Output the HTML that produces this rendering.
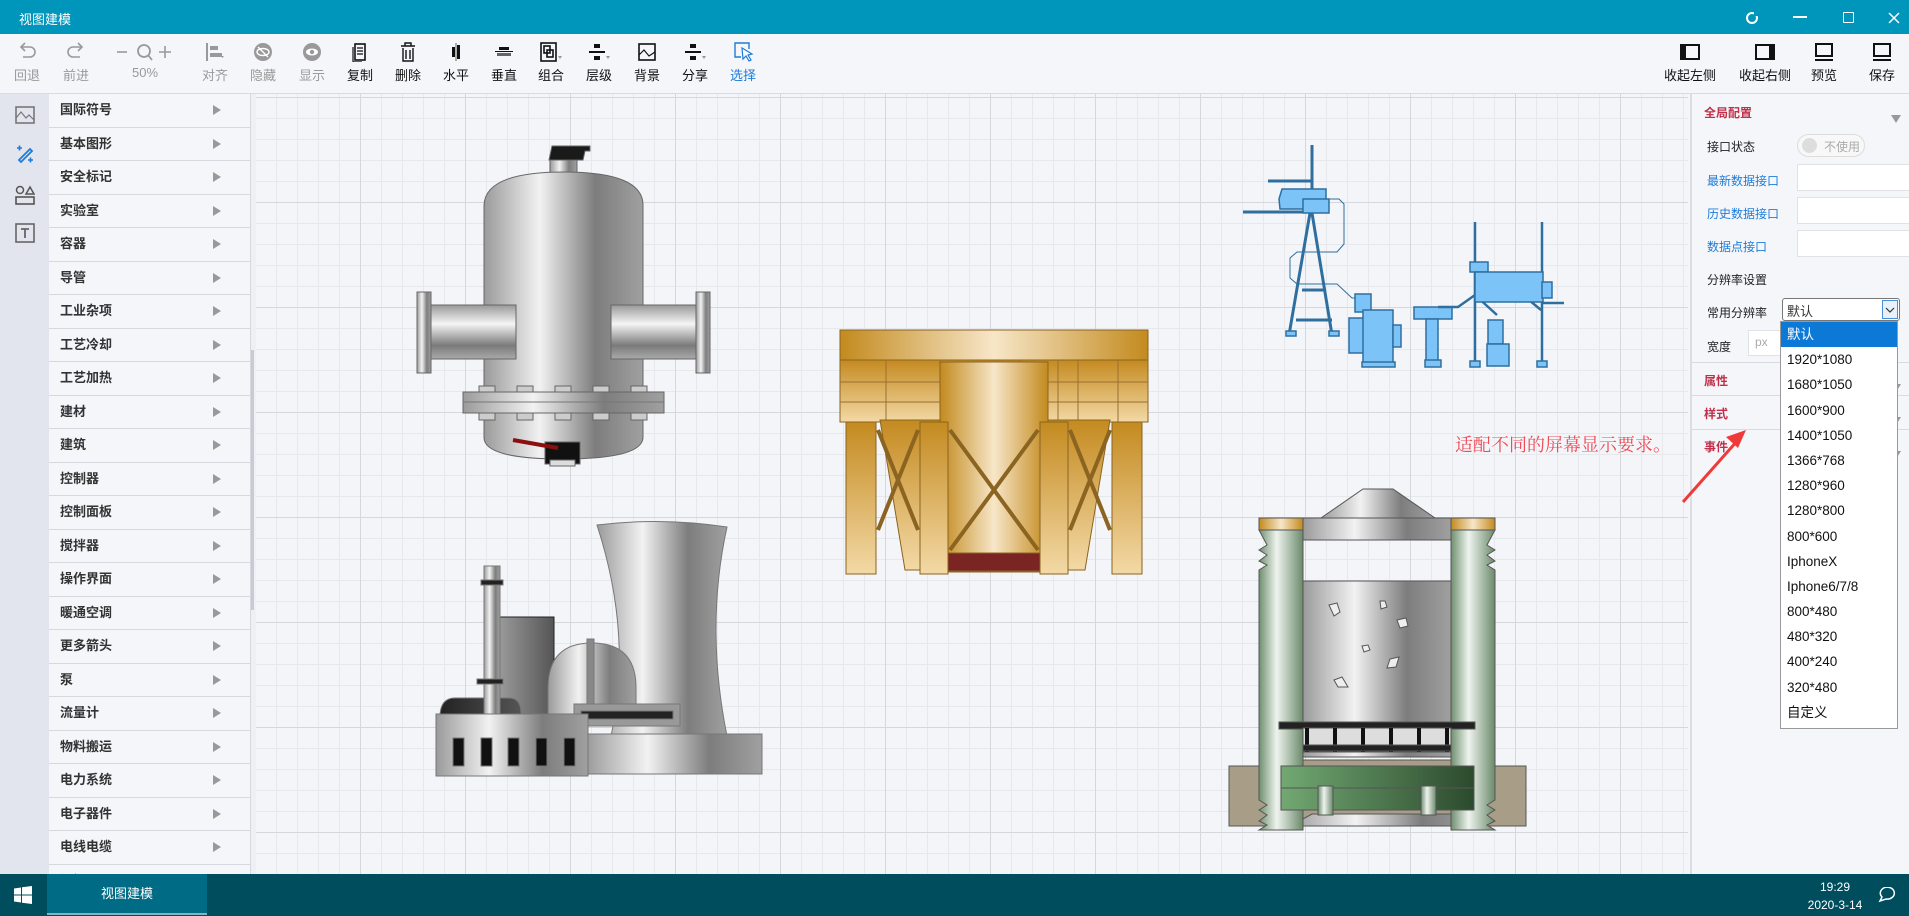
<!DOCTYPE html>
<html><head><meta charset="utf-8"><style>
*{margin:0;padding:0;box-sizing:border-box}
html,body{width:1909px;height:916px;overflow:hidden}
body{position:relative;background:#f4f6fa;font-family:"Liberation Sans","Noto Sans CJK SC",sans-serif;font-size:13px;color:#333}
.abs{position:absolute}
#title{left:0;top:0;width:1909px;height:34px;background:#0096bb;color:#fff}
#tb{left:0;top:34px;width:1909px;height:60px;background:#f4f6fa;border-bottom:1px solid #d8dbe2}
.tool{position:absolute;top:0;width:44px;text-align:center;font-size:13px;color:#111}
.tool svg{display:block;margin:8px auto 3px;width:22px;height:20px}
.gray{color:#999}
#side{left:0;top:94px;width:49px;height:780px;background:#e2e5ed}
#list{left:49px;top:94px;width:201px;height:780px;background:#f4f6fa;overflow:hidden}
.it{height:33.5px;border-bottom:1px solid #d5d8de;line-height:32px;padding-left:11px;font-weight:bold;color:#333;position:relative;font-size:13px}
.it:after{content:"";position:absolute;left:164px;top:11px;border-left:8px solid #999;border-top:5px solid transparent;border-bottom:5px solid transparent}
#canvas{left:256px;top:94px;width:1432px;height:780px;background-color:#f4f5f9;
background-image:linear-gradient(#d5d7dc 1px,transparent 1px),linear-gradient(90deg,#d5d7dc 1px,transparent 1px),linear-gradient(#e6e8ec 1px,transparent 1px),linear-gradient(90deg,#e6e8ec 1px,transparent 1px);
background-size:105px 105px,105px 105px,21px 21px,21px 21px;background-position:0 3px,-1px 0,0 3px,-1px 0}
#rp{left:1690px;top:94px;width:219px;height:780px;background:#f4f6fa;border-left:2px solid #dadde3}
.lbl{position:absolute;font-size:12px;color:#222}
.blue{color:#1f7bd8}
.red{color:#c0304a;font-weight:bold}
.inp{position:absolute;background:#fff;border:1px solid #dfe2e7}
.sec{position:absolute;left:0;width:219px;border-top:1px solid #d8dbe1}
.tri{position:absolute;right:8px;border-top:8px solid #999;border-left:5px solid transparent;border-right:5px solid transparent}
#dd{left:1780px;top:321px;width:118px;height:408px;background:#fff;border:1px solid #999}
#dd div{height:25.2px;line-height:25px;padding-left:6px;font-size:13.5px;color:#111}
#task{left:0;top:874px;width:1909px;height:42px;background:#004d5e;color:#fff}
</style></head><body>

<div id="title" class="abs">
 <div class="abs" style="left:19px;top:9px;font-size:13px">视图建模</div>
 <svg class="abs" style="left:1745px;top:11px" width="14" height="14" viewBox="0 0 14 14"><circle cx="7" cy="7" r="5" fill="none" stroke="#fff" stroke-width="2"/><rect x="9" y="1" width="4" height="4" fill="#0096bb"/></svg>
 <div class="abs" style="left:1793px;top:16px;width:14px;height:2px;background:#fff"></div>
 <div class="abs" style="left:1843px;top:12px;width:11px;height:11px;border:1.5px solid #fff;border-radius:1px"></div>
 <svg class="abs" style="left:1888px;top:12px" width="12" height="12"><path d="M1 1L11 11M11 1L1 11" stroke="#fff" stroke-width="1.5"/></svg>
</div>

<div id="tb" class="abs">
 <div class="tool gray" style="left:5px"><svg viewBox="0 0 22 20"><path d="M6 5h8a5 5 0 0 1 0 10H7M9 1L5 5l4 4" fill="none" stroke="#999" stroke-width="1.6"/></svg>回退</div>
 <div class="tool gray" style="left:54px"><svg viewBox="0 0 22 20"><path d="M16 5H8a5 5 0 0 0 0 10h7M13 1l4 4-4 4" fill="none" stroke="#999" stroke-width="1.6"/></svg>前进</div>
 <div class="tool gray" style="left:110px;width:70px"><svg viewBox="0 0 60 20" style="width:60px"><path d="M2 10h10" stroke="#999" stroke-width="1.6"/><circle cx="29" cy="9" r="6" fill="none" stroke="#999" stroke-width="1.8"/><path d="M33 13l4 5" stroke="#999" stroke-width="1.8"/><path d="M44 10h12M50 4v12" stroke="#999" stroke-width="1.6"/></svg>50%</div>
 <div class="tool gray" style="left:193px"><svg viewBox="0 0 22 20"><path d="M3 1v18" stroke="#999" stroke-width="2"/><rect x="6" y="4" width="8" height="4" fill="#999"/><rect x="6" y="11" width="12" height="4" fill="#999"/><path d="M17 14l3 0-1.5 2z" fill="#999"/></svg>对齐</div>
 <div class="tool gray" style="left:241px"><svg viewBox="0 0 22 20"><circle cx="11" cy="10" r="9" fill="#999"/><ellipse cx="11" cy="10" rx="6" ry="3.5" fill="none" stroke="#fff" stroke-width="1.4"/><path d="M6 5l10 10" stroke="#fff" stroke-width="1.4"/></svg>隐藏</div>
 <div class="tool gray" style="left:290px"><svg viewBox="0 0 22 20"><circle cx="11" cy="10" r="9" fill="#999"/><ellipse cx="11" cy="10" rx="6" ry="3.5" fill="#fff"/><circle cx="11" cy="10" r="2.2" fill="#999"/></svg>显示</div>
 <div class="tool" style="left:338px"><svg viewBox="0 0 22 20"><rect x="6" y="2" width="10" height="16" fill="none" stroke="#111" stroke-width="1.6"/><path d="M8 6h6M8 9h6M8 12h6" stroke="#111" stroke-width="1.2"/><path d="M4 5v15h9" fill="none" stroke="#111" stroke-width="1.2"/></svg>复制</div>
 <div class="tool" style="left:386px"><svg viewBox="0 0 22 20"><path d="M4 4h14M8 4V1h6v3M6 6v13h10V6M9 8v9M13 8v9" fill="none" stroke="#111" stroke-width="1.4"/></svg>删除</div>
 <div class="tool" style="left:434px"><svg viewBox="0 0 22 20"><rect x="7" y="5" width="3" height="10" fill="#111"/><rect x="12" y="3" width="3" height="14" fill="#111"/><path d="M11 1v18" stroke="#666"/></svg>水平</div>
 <div class="tool" style="left:482px"><svg viewBox="0 0 22 20"><rect x="6" y="5" width="10" height="3" fill="#111"/><rect x="4" y="11" width="14" height="3" fill="#666"/><path d="M2 9.5h18" stroke="#111"/></svg>垂直</div>
 <div class="tool" style="left:529px"><svg viewBox="0 0 22 20"><rect x="1" y="1" width="15" height="18" fill="none" stroke="#111" stroke-width="1.6"/><rect x="4" y="4" width="6" height="7" fill="none" stroke="#111" stroke-width="1.6"/><rect x="7" y="8" width="6" height="7" fill="none" stroke="#111" stroke-width="1.6"/><path d="M18 14h4l-2 3z" fill="#999"/></svg>组合</div>
 <div class="tool" style="left:577px"><svg viewBox="0 0 22 20"><rect x="6" y="2" width="6" height="4" fill="#111"/><rect x="1" y="9" width="16" height="2" fill="#111"/><rect x="6" y="14" width="6" height="4" fill="#111"/><path d="M18 14h4l-2 3z" fill="#999"/></svg>层级</div>
 <div class="tool" style="left:625px"><svg viewBox="0 0 22 20"><rect x="3" y="2" width="16" height="16" fill="none" stroke="#111" stroke-width="1.6"/><path d="M3 13l5-5 5 6 6-4" fill="none" stroke="#111" stroke-width="1.2"/></svg>背景</div>
 <div class="tool" style="left:673px"><svg viewBox="0 0 22 20"><rect x="6" y="2" width="6" height="4" fill="#111"/><rect x="1" y="9" width="16" height="2" fill="#111"/><rect x="6" y="14" width="6" height="4" fill="#111"/><path d="M18 14h4l-2 3z" fill="#999"/></svg>分享</div>
 <div class="tool" style="left:721px;color:#1f7bd8"><svg viewBox="0 0 22 20"><path d="M9 15H3V1h14v6" fill="none" stroke="#1f7bd8" stroke-width="1.4"/><path d="M10 6l10 6-4 1 3 5-2 1-3-5-3 3z" fill="#fff" stroke="#1f7bd8" stroke-width="1.2"/></svg>选择</div>
 <div class="tool" style="left:1660px;width:60px"><svg viewBox="0 0 22 20"><rect x="2" y="3" width="18" height="14" fill="none" stroke="#111" stroke-width="2"/><rect x="2" y="3" width="5" height="14" fill="#111"/></svg>收起左侧</div>
 <div class="tool" style="left:1735px;width:60px"><svg viewBox="0 0 22 20"><rect x="2" y="3" width="18" height="14" fill="none" stroke="#111" stroke-width="2"/><rect x="15" y="3" width="5" height="14" fill="#111"/></svg>收起右侧</div>
 <div class="tool" style="left:1802px;width:44px"><svg viewBox="0 0 22 20"><rect x="3" y="2" width="16" height="12" fill="none" stroke="#111" stroke-width="2"/><path d="M2 18h18" stroke="#111" stroke-width="2"/></svg>预览</div>
 <div class="tool" style="left:1860px;width:44px"><svg viewBox="0 0 22 20"><rect x="3" y="2" width="16" height="12" fill="none" stroke="#111" stroke-width="2"/><path d="M2 18h18" stroke="#111" stroke-width="2"/></svg>保存</div>
</div>

<div id="side" class="abs">
 <svg class="abs" style="left:15px;top:12px" width="20" height="18"><rect x="1" y="1" width="18" height="16" fill="none" stroke="#777" stroke-width="1.6"/><path d="M1 12l5-6 5 6 3-3 5 5" fill="none" stroke="#777" stroke-width="1.2"/></svg>
 <svg class="abs" style="left:15px;top:50px" width="20" height="20"><path d="M4 16L15 5l2 2L6 18z" fill="none" stroke="#1f7bd8" stroke-width="1.8"/><path d="M2 4h5M4.5 1.5v5M13 16h5M15.5 13.5v5" stroke="#1f7bd8" stroke-width="1.6"/></svg>
 <svg class="abs" style="left:15px;top:91px" width="20" height="20"><circle cx="5" cy="5" r="3.5" fill="none" stroke="#555" stroke-width="1.5"/><path d="M11 9l4-7 4 7z" fill="none" stroke="#555" stroke-width="1.5"/><rect x="1" y="12" width="18" height="7" fill="none" stroke="#555" stroke-width="1.6"/></svg>
 <svg class="abs" style="left:15px;top:129px" width="20" height="20"><rect x="1" y="1" width="18" height="18" fill="none" stroke="#666" stroke-width="1.6"/><path d="M6 6h8M10 6v9" stroke="#666" stroke-width="1.8"/></svg>
</div>
<div id="list" class="abs">
 <div class="it">国际符号</div><div class="it">基本图形</div><div class="it">安全标记</div><div class="it">实验室</div><div class="it">容器</div><div class="it">导管</div><div class="it">工业杂项</div><div class="it">工艺冷却</div><div class="it">工艺加热</div><div class="it">建材</div><div class="it">建筑</div><div class="it">控制器</div><div class="it">控制面板</div><div class="it">搅拌器</div><div class="it">操作界面</div><div class="it">暖通空调</div><div class="it">更多箭头</div><div class="it">泵</div><div class="it">流量计</div><div class="it">物料搬运</div><div class="it">电力系统</div><div class="it">电子器件</div><div class="it">电线电缆</div><div class="it">阀门</div>
</div>
<div class="abs" style="left:250px;top:94px;width:6px;height:780px;background:#eef0f4;border-left:1px solid #d5d8de"></div>
<div class="abs" style="left:251px;top:350px;width:3px;height:260px;background:#c8cbd1"></div>

<div id="canvas" class="abs"></div>

<svg class="abs" style="left:0;top:0" width="1909" height="916">
<defs>
 <linearGradient id="m" x1="0" x2="1"><stop offset="0" stop-color="#9a9a9a"/><stop offset=".35" stop-color="#f2f2f2"/><stop offset=".7" stop-color="#7d7d7d"/><stop offset="1" stop-color="#a0a0a0"/></linearGradient>
 <linearGradient id="mv" x1="0" y1="0" x2="0" y2="1"><stop offset="0" stop-color="#999"/><stop offset=".35" stop-color="#f5f5f5"/><stop offset=".75" stop-color="#7a7a7a"/><stop offset="1" stop-color="#aaa"/></linearGradient>
 <linearGradient id="g" x1="0" x2="1"><stop offset="0" stop-color="#c38a1e"/><stop offset=".5" stop-color="#f7e6c8"/><stop offset="1" stop-color="#c38a1e"/></linearGradient>
 <linearGradient id="gv" x1="0" y1="0" x2="0" y2="1"><stop offset="0" stop-color="#c48a20"/><stop offset="1" stop-color="#f3d9a6"/></linearGradient>
 <linearGradient id="gr" x1="0" x2="1"><stop offset="0" stop-color="#6f8f6f"/><stop offset=".4" stop-color="#eef3ee"/><stop offset="1" stop-color="#6b8a6b"/></linearGradient>
 <linearGradient id="gb" x1="0" x2="1"><stop offset="0" stop-color="#72a872"/><stop offset="1" stop-color="#2c4a2e"/></linearGradient>
 <linearGradient id="dk" x1="0" x2="1"><stop offset="0" stop-color="#222"/><stop offset="1" stop-color="#555"/></linearGradient>
 <linearGradient id="dg" x1="0" x2="1"><stop offset="0" stop-color="#999"/><stop offset="1" stop-color="#555"/></linearGradient>
</defs>
<!-- tank -->
<g stroke="#666" stroke-width="1">
 <path d="M549 160l3-14h38v5h-5l-2 9z" fill="#1a1a1a"/>
 <rect x="550" y="160" width="27" height="14" fill="url(#m)"/>
 <path d="M484 437V206q0-34 80-34t79 34v231q0 22-80 22t-79-22z" fill="url(#m)"/>
 <rect x="431" y="305" width="85" height="54" fill="url(#mv)"/>
 <rect x="611" y="305" width="85" height="54" fill="url(#mv)"/>
 <rect x="417" y="292" width="14" height="81" fill="url(#m)"/>
 <rect x="696" y="292" width="14" height="81" fill="url(#m)"/>
 <g fill="#ccc"><rect x="479" y="386" width="16" height="7"/><rect x="517" y="386" width="16" height="7"/><rect x="555" y="386" width="16" height="7"/><rect x="593" y="386" width="16" height="7"/><rect x="631" y="386" width="16" height="7"/>
 <rect x="479" y="413" width="16" height="7"/><rect x="517" y="413" width="16" height="7"/><rect x="555" y="413" width="16" height="7"/><rect x="593" y="413" width="16" height="7"/><rect x="631" y="413" width="16" height="7"/></g>
 <rect x="463" y="392" width="201" height="21" fill="url(#m)"/>
 <path d="M463 402h201" stroke="#777"/>
 <rect x="545" y="442" width="35" height="22" fill="#111"/>
 <rect x="550" y="460" width="25" height="6" fill="#ddd"/>
 <path d="M513 440l45 8" stroke="#8a1010" stroke-width="4"/>
</g>
<!-- yellow structure -->
<g stroke="#8a6420" stroke-width="1">
 <rect x="840" y="330" width="308" height="30" fill="url(#g)"/>
 <rect x="840" y="360" width="308" height="62" fill="url(#gv)"/>
 <path d="M840 382h308M840 402h308M886 360v62M1058 360v62M940 360v62M1020 360v62M1078 360v62M1118 360v62" stroke="#9a7030" fill="none"/>
 <path d="M880 420h230l-25 150H905z" fill="url(#gv)"/>
 <rect x="940" y="362" width="108" height="210" fill="url(#g)"/>
 <rect x="944" y="553" width="100" height="18" fill="#7a2424"/>
 <rect x="846" y="422" width="30" height="152" fill="url(#gv)"/>
 <rect x="920" y="422" width="28" height="152" fill="url(#gv)"/>
 <rect x="1040" y="422" width="28" height="152" fill="url(#gv)"/>
 <rect x="1112" y="422" width="30" height="152" fill="url(#gv)"/>
 <path d="M878 430l40 100M918 430l-40 100M950 430l88 120M1038 430l-88 120M1070 430l40 100M1110 430l-40 100" stroke="#8a6420" stroke-width="4"/>
</g>
<!-- blue plant -->
<g stroke="#2f6f9f" stroke-width="1.5" fill="#7cc4f8">
 <path d="M1312 145v55M1268 181h44M1243 212h60" fill="none" stroke-width="3"/>
 <path d="M1279 199l3-10h44v20h-46z"/>
 <rect x="1303" y="199" width="26" height="14"/>
 <path d="M1310 213l-21 122M1312 213l20 122M1296 320h36M1302 290h24" fill="none" stroke-width="3"/>
 <path d="M1329 199h10l5 5v40l-7 8h-40l-7 6v20l7 6h40l15 14h10" fill="none" stroke-width="1"/>
 <rect x="1286" y="331" width="10" height="5"/><rect x="1329" y="331" width="10" height="5"/>
 <rect x="1355" y="294" width="16" height="18"/><rect x="1349" y="318" width="16" height="35"/><rect x="1363" y="310" width="30" height="55"/><rect x="1393" y="325" width="8" height="22"/><rect x="1362" y="362" width="33" height="5"/>
 <rect x="1414" y="307" width="38" height="12"/><rect x="1426" y="319" width="12" height="43"/><rect x="1425" y="360" width="16" height="7"/>
 <path d="M1438 307h20l17-12M1475 222v140M1542 222v140M1475 295l22 20M1529 300l12 10M1542 303h22" fill="none" stroke-width="2.5"/>
 <rect x="1470" y="262" width="18" height="10"/><rect x="1475" y="272" width="68" height="30"/><rect x="1542" y="282" width="10" height="16"/>
 <rect x="1488" y="320" width="15" height="24"/><rect x="1487" y="344" width="22" height="22"/>
 <rect x="1470" y="361" width="10" height="6"/><rect x="1537" y="361" width="10" height="6"/>
</g>
<!-- nuclear -->
<g stroke="#777" stroke-width="1">
 <path d="M597 525q66-8 130 2q-22 100 0 209H611q22-100-14-211z" fill="url(#m)"/>
 <rect x="500" y="617" width="54" height="100" fill="url(#dg)" stroke="#222"/>
 <rect x="586" y="734" width="176" height="40" fill="url(#m)"/>
 <path d="M548 714v-26q0-45 44-45t44 45v26z" fill="url(#m)"/>
 <rect x="587" y="639" width="7" height="65" fill="#888"/>
 <rect x="574" y="704" width="106" height="22" fill="#999"/>
 <rect x="581" y="711" width="92" height="8" fill="#222"/>
 <path d="M440 717q0-19 15-19h54q12 0 12 15v4z" fill="url(#dk)"/>
 <rect x="484" y="566" width="16" height="151" fill="url(#m)"/>
 <rect x="481" y="580" width="22" height="5" fill="#222"/><rect x="477" y="679" width="26" height="5" fill="#222"/>
 <rect x="436" y="714" width="152" height="62" fill="url(#m)"/>
 <g fill="#111"><rect x="453" y="738" width="11" height="28"/><rect x="481" y="738" width="11" height="28"/><rect x="508" y="738" width="11" height="28"/><rect x="536" y="738" width="11" height="28"/><rect x="564" y="738" width="11" height="28"/></g>
</g>
<!-- mill -->
<g stroke="#555" stroke-width="1">
 <path d="M1363 489h30l42 29h-114z" fill="url(#m)"/>
 <rect x="1303" y="518" width="148" height="22" fill="url(#m)"/>
 <rect x="1259" y="518" width="44" height="12" fill="url(#g)"/><rect x="1451" y="518" width="44" height="12" fill="url(#g)"/>
 <path d="M1229 766h68v-6h184v6h45v60h-297z" fill="#a89e88"/>
 <path d="M1290 826l22-12h144l22 12z" fill="url(#m)"/>
 <path d="M1259 530h44v300h-44l8-5-8-4 8-6-8-5 8-5-8-5v-230l8-5-8-4 8-6-8-5 8-5z" fill="url(#gr)"/>
 <path d="M1495 530h-44v300h44l-8-5 8-4-8-6 8-5-8-5 8-5v-230l-8-5 8-4-8-6 8-5-8-5z" fill="url(#gr)"/>
 <rect x="1303" y="581" width="148" height="176" fill="url(#m)"/>
 <rect x="1279" y="722" width="196" height="7" fill="#222"/>
 <rect x="1303" y="728" width="148" height="24" fill="#ddd"/>
 <path d="M1307 728v24M1335 728v24M1363 728v24M1391 728v24M1419 728v24M1447 728v24" stroke="#111" stroke-width="4"/>
 <rect x="1303" y="745" width="148" height="6" fill="#222"/>
 <rect x="1281" y="766" width="193" height="44" fill="url(#gb)"/>
 <path d="M1281 788h193"/>
 <rect x="1318" y="786" width="15" height="29" fill="url(#gr)"/><rect x="1421" y="786" width="15" height="29" fill="url(#gr)"/>
 <g fill="#eee"><path d="M1329 605l8-2 3 9-6 4z"/><path d="M1380 601l5 0 2 6-6 2z"/><path d="M1397 620l9-2 2 8-8 2z"/><path d="M1362 646l6-1 2 5-6 2z"/><path d="M1390 659l9-2-3 10-9 1z"/><path d="M1334 680l8-3 6 10-10 0z"/></g>
</g>
</svg>
<div class="abs" style="left:1455px;top:431px;font-family:'Liberation Serif','Noto Serif CJK SC',serif;font-size:18px;color:#ef4a55">适配不同的屏幕显示要求。</div>

<div id="rp" class="abs">
 <div class="lbl red" style="left:12px;top:10px">全局配置</div>
 <div class="tri" style="top:21px"></div>
 <div class="lbl" style="left:15px;top:44px">接口状态</div>
 <div class="abs" style="left:105px;top:40px;width:68px;height:23px;border:1px solid #ddd;border-radius:12px;background:#f8f8f8"><div class="abs" style="left:4px;top:3px;width:15px;height:15px;border-radius:8px;background:#ddd"></div><div class="abs" style="left:26px;top:3px;font-size:12px;color:#aaa">不使用</div></div>
 <div class="lbl blue" style="left:15px;top:78px">最新数据接口</div><div class="inp" style="left:105px;top:70px;width:120px;height:27px"></div>
 <div class="lbl blue" style="left:15px;top:111px">历史数据接口</div><div class="inp" style="left:105px;top:103px;width:120px;height:27px"></div>
 <div class="lbl blue" style="left:15px;top:144px">数据点接口</div><div class="inp" style="left:105px;top:136px;width:120px;height:27px"></div>
 <div class="lbl" style="left:15px;top:177px">分辨率设置</div>
 <div class="lbl" style="left:15px;top:210px">常用分辨率</div>
 <div class="abs" style="left:90px;top:204px;width:118px;height:23px;border:1px solid #777;border-radius:3px;background:#fff;font-size:13px;padding:2px 4px">默认<div class="abs" style="right:1px;top:1px;width:16px;height:19px;border:1px solid #4a90d9;background:#e8f1fb"><svg width="14" height="17"><path d="M3 7l4 4 4-4" fill="none" stroke="#333" stroke-width="1.2"/></svg></div></div>
 <div class="lbl" style="left:15px;top:244px">宽度</div>
 <div class="inp" style="left:56px;top:236px;width:60px;height:26px;color:#aaa;font-size:12px;padding:4px 6px">px</div>
 <div class="sec" style="top:268px"></div>
 <div class="lbl red" style="left:12px;top:278px">属性</div><div class="tri" style="top:290px"></div>
 <div class="sec" style="top:301px"></div>
 <div class="lbl red" style="left:12px;top:311px">样式</div><div class="tri" style="top:323px"></div>
 <div class="sec" style="top:335px"></div>
 <div class="lbl red" style="left:12px;top:344px">事件</div><div class="tri" style="top:357px"></div>
</div>

<div id="dd" class="abs">
 <div style="background:#0c79d6;color:#fff">默认</div><div>1920*1080</div><div>1680*1050</div><div>1600*900</div><div>1400*1050</div><div>1366*768</div><div>1280*960</div><div>1280*800</div><div>800*600</div><div>IphoneX</div><div>Iphone6/7/8</div><div>800*480</div><div>480*320</div><div>400*240</div><div>320*480</div><div>自定义</div>
</div>

<svg class="abs" style="left:1670px;top:420px" width="90" height="90">
 <path d="M13 82L68 20" stroke="#f03a3a" stroke-width="3"/>
 <path d="M76 10l-20 7 12 11z" fill="#f03a3a"/>
</svg>

<div id="task" class="abs">
 <svg class="abs" style="left:14px;top:12px" width="18" height="18"><path d="M0 2.5l7-1v7H0zM8 1.3L18 0v8.5H8zM0 9.5h7v7l-7-1zM8 9.5h10V18L8 16.7z" fill="#fff"/></svg>
 <div class="abs" style="left:47px;top:0;width:160px;height:41px;background:#006b85;border-bottom:2px solid #7fb6c6;text-align:center;line-height:40px;font-size:13px">视图建模</div>
 <div class="abs" style="left:1790px;top:4px;width:90px;text-align:center;font-size:12px;line-height:18px;white-space:nowrap">19:29<br>2020-3-14</div>
 <svg class="abs" style="left:1877px;top:13px" width="20" height="17"><path d="M3 14l2-4a7 6 0 1 1 4 2z" fill="none" stroke="#fff" stroke-width="1.5"/></svg>
</div>
</body></html>
